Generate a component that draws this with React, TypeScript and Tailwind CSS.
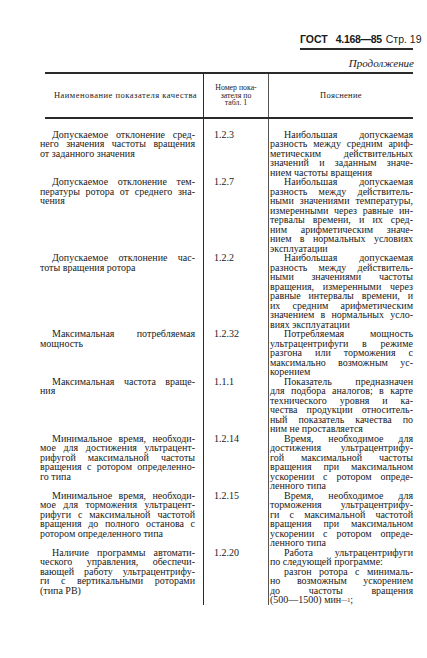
import React from "react";

type Para = React.ReactNode[];
type Row = { c1: Para[]; c2: string; c3: Para[] };

const unit = (
  <>
    (500—1500) мин<sup className="text-[6px] relative top-[-1px]">—1</sup>;
  </>
);

const rows: Row[] = [
  {
    c1: [["Допускаемое отклонение сред-", "него значения частоты вращения", "от заданного значения"]],
    c2: "1.2.3",
    c3: [["Наибольшая допускаемая", "разность между средним ариф-", "метическим действительных", "значений и заданным значе-", "нием частоты вращения"]],
  },
  {
    c1: [["Допускаемое отклонение тем-", "пературы ротора от среднего зна-", "чения"]],
    c2: "1.2.7",
    c3: [["Наибольшая допускаемая", "разность между действитель-", "ными значениями температуры,", "измеренными через равные ин-", "тервалы времени, и их сред-", "ним арифметическим значе-", "нием в нормальных условиях", "эксплуатации"]],
  },
  {
    c1: [["Допускаемое отклонение час-", "тоты вращения ротора"]],
    c2: "1.2.2",
    c3: [["Наибольшая допускаемая", "разность между действитель-", "ными значениями частоты", "вращения, измеренными через", "равные интервалы времени, и", "их средним арифметическим", "значением в нормальных усло-", "виях эксплуатации"]],
  },
  {
    c1: [["Максимальная потребляемая", "мощность"]],
    c2: "1.2.32",
    c3: [["Потребляемая мощность", "ультрацентрифуги в режиме", "разгона или торможения с", "максимально возможным ус-", "корением"]],
  },
  {
    c1: [["Максимальная частота враще-", "ния"]],
    c2: "1.1.1",
    c3: [["Показатель предназначен", "для подбора аналогов; в карте", "технического уровня и ка-", "чества продукции относитель-", "ный показатель качества по", "ним не проставляется"]],
  },
  {
    c1: [["Минимальное время, необходи-", "мое для достижения ультрацент-", "рифугой максимальной частоты", "вращения с ротором определенно-", "го типа"]],
    c2: "1.2.14",
    c3: [["Время, необходимое для", "достижения ультрацентрифу-", "гой максимальной частоты", "вращения при максимальном", "ускорении с ротором опреде-", "ленного типа"]],
  },
  {
    c1: [["Минимальное время, необходи-", "мое для торможения ультрацент-", "рифуги с максимальной частотой", "вращения до полного останова с", "ротором определенного типа"]],
    c2: "1.2.15",
    c3: [["Время, необходимое для", "торможения ультрацентрифу-", "ги с максимальной частотой", "вращения при максимальном", "ускорении с ротором опреде-", "ленного типа"]],
  },
  {
    c1: [["Наличие программы автомати-", "ческого управления, обеспечи-", "вающей работу ультрацентрифу-", "ги с вертикальными роторами", "(типа РВ)"]],
    c2: "1.2.20",
    c3: [["Работа ультрацентрифуги", "по следующей программе:"], ["разгон ротора с минималь-", "но возможным ускорением", "до частоты вращения", unit]],
  },
];

function Cell({ paras, indent }: { paras: Para[]; indent: "c1" | "c3" }) {
  return (
    <>
      {paras.map((p, pi) =>
        p.map((line, li) => {
          const first = li === 0;
          const last = li === p.length - 1;
          const ind = first ? (indent === "c1" ? "pl-[12px]" : "pl-[14px]") : "";
          const just = last ? "" : "text-justify [text-align-last:justify]";
          return (
            <div key={`${pi}-${li}`} className={`h-[9.5px] leading-[9.5px] whitespace-nowrap ${ind} ${just}`}>
              {line}
            </div>
          );
        })
      )}
    </>
  );
}

const sans = { fontFamily: '"Liberation Sans", Arial, sans-serif' };

export default function App() {
  return (
    <div
      className="w-[427px] h-[658px] bg-white text-[#1a1a1a] overflow-hidden flex flex-col"
      style={{ fontFamily: '"Liberation Serif", "DejaVu Serif", serif' }}
    >
      <div className="flex justify-end pr-[14px] pt-[33px]">
        <div className="w-[113px] border-b-2 border-[#2a2a2a] pb-[3px] flex items-baseline whitespace-nowrap text-[10.5px] leading-[12px]">
          <span className="font-bold" style={sans}>ГОСТ</span>
          <span className="font-bold ml-[8px] tracking-[-0.3px]" style={sans}>4.168—85</span>
          <span className="ml-[4px]" style={sans}>Стр. 19</span>
        </div>
      </div>
      <div className="flex justify-end pr-[13px] mt-[7px]">
        <span className="italic text-[11px] leading-[12px]">Продолжение</span>
      </div>
      <div className="ml-[40px] w-[373px] mt-[3px] flex flex-col">
        <div className="ml-[5px] h-[2px] bg-[#2a2a2a]" />
        <div className="flex h-[43px]">
          <div className="w-[163px] pl-[8px] flex items-center justify-center text-[8.5px] tracking-[0.5px] whitespace-nowrap">
            Наименование показателя качества
          </div>
          <div className="w-[65px] border-l-[1.5px] border-[#2a2a2a] flex flex-col items-center justify-center text-[7.8px] leading-[7.5px] text-center">
            <div>Номер пока-</div>
            <div>зателя по</div>
            <div>табл. 1</div>
          </div>
          <div className="w-[145px] border-l border-[#555] flex items-center justify-center text-[8.5px] tracking-[0.3px]">
            Пояснение
          </div>
        </div>
        <div className="ml-[5px] h-[1.5px] bg-[#2a2a2a]" />
        <div className="flex flex-col text-[10px]">
          {rows.map((r, i) => (
            <div key={i} className="flex">
              <div className={`w-[163px] pr-[8px] ${i === 0 ? "pt-[11px]" : ""}`}>
                <Cell paras={r.c1} indent="c1" />
              </div>
              <div className={`w-[65px] border-l-[1.5px] border-[#2a2a2a] pl-[10px] leading-[9.5px] ${i === 0 ? "pt-[11px]" : ""}`}>
                {r.c2}
              </div>
              <div className={`w-[145px] border-l border-[#555] pl-[1px] ${i === 0 ? "pt-[11px]" : ""}`}>
                <Cell paras={r.c3} indent="c3" />
              </div>
            </div>
          ))}
        </div>
      </div>
    </div>
  );
}
